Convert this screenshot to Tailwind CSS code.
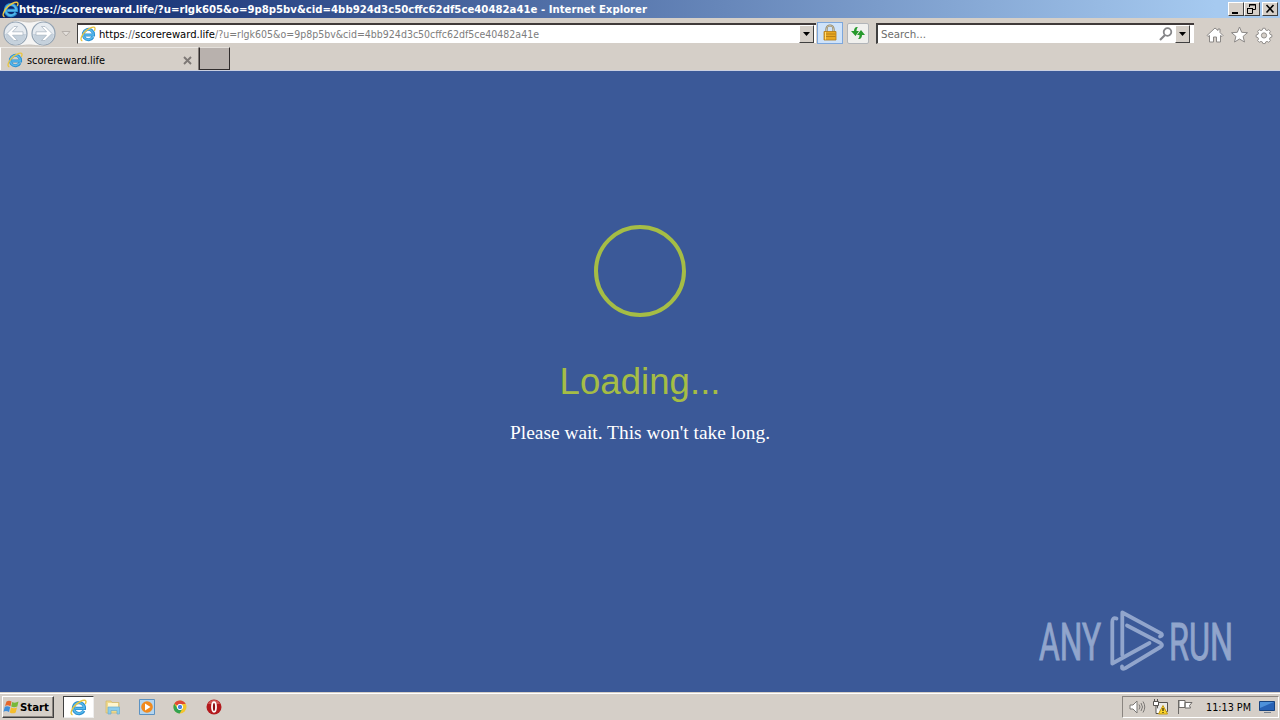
<!DOCTYPE html>
<html lang="en">
<head>
  <meta charset="UTF-8">
  <title>scorereward.life</title>
  <script src="https://cdn.jsdelivr.net/npm/@tailwindcss/browser@4"></script>
</head>
<body class="w-[1280px] h-[720px] overflow-hidden flex flex-col bg-[#d5cfc8] font-['DejaVu_Sans_Condensed','DejaVu_Sans',sans-serif] text-[11px] text-black">

  <!-- shared icons -->
  <svg class="hidden">
    <symbol id="ie" viewBox="0 0 16 16">
      <path d="M13 11A5.200 5.200 0 1 1 13.600 8.900H5" fill="none" stroke="#2b8fd0" stroke-width="3"/>
      <path d="M12.700 10.900A5 5 0 1 1 13.300 8.900H5" fill="none" stroke="#56b9ec" stroke-width="1.500"/>
      <path d="M2.400 14.800C-.6 14.200 1.600 8.600 6.400 4.600C10 1.600 14.400-.1 15 2.200C15.200 3 14.800 4 14.300 4.800" fill="none" stroke="#e9c540" stroke-width="1.300"/>
    </symbol>
    <symbol id="down" viewBox="0 0 7 4"><path d="M0 0h7L3.500 4z" fill="#000"/></symbol>
  </svg>

  <!-- title bar -->
  <header class="h-[18px] shrink-0 flex items-center bg-linear-to-r/srgb from-[#0a246a] to-[#a6caf0] to-95% pl-[2px] pr-[2px]">
    <svg class="size-[17px] shrink-0"><use href="#ie"/></svg>
    <svg class="w-[660px] h-[18px]"><text x="0" y="13" textLength="628" lengthAdjust="spacingAndGlyphs" font-family="DejaVu Sans" font-weight="bold" font-size="11" fill="#fff">https://scorereward.life/?u=rlgk605&amp;o=9p8p5bv&amp;cid=4bb924d3c50cffc62df5ce40482a41e - Internet Explorer</text></svg>
    <div class="ml-auto flex">
      <div class="w-4 h-[14px] bg-[#d5cfc8] border border-t-white border-l-white border-r-[#404040] border-b-[#404040]"><svg class="w-[14px] h-3"><path d="M3 9h6v2H3z"/></svg></div>
      <div class="w-4 h-[14px] bg-[#d5cfc8] border border-t-white border-l-white border-r-[#404040] border-b-[#404040]"><svg class="w-[14px] h-3" fill="none" stroke="#000"><path d="M4.500 4V1.500h6v5H8M4 2h7M2.500 5.500h5v5h-5zM2 5.500h6"/></svg></div>
      <div class="ml-[2px] w-4 h-[14px] bg-[#d5cfc8] border border-t-white border-l-white border-r-[#404040] border-b-[#404040]"><svg class="w-[14px] h-3" stroke="#000" stroke-width="1.600"><path d="M3.500 2l7 7.500M10.500 2l-7 7.500"/></svg></div>
    </div>
  </header>

  <!-- navigation bar -->
  <nav class="h-[29px] shrink-0 flex items-center">
    <svg class="w-[77px] h-[29px] shrink-0">
      <path d="M15 2.500C22 2.500 24 4 29 4S36 2.500 43 2.500A13 13 0 0 1 43 28C36 28 34 27 29 27S22 28 15 28A13 13 0 0 1 15 2.500Z" fill="#f5f4f3" stroke="#c6c2bd"/>
      <g fill="#e6ebf0" stroke="#93a3b3" stroke-width="1.200"><circle cx="15.500" cy="15.500" r="11.500"/><circle cx="43.500" cy="15.500" r="11.500"/></g>
      <path d="M5 16a10.500 10.500 0 0 0 21 0zM33 16a10.500 10.500 0 0 0 21 0z" fill="#c5d1dc"/>
      <g fill="#fff" stroke="#a3b0bd" stroke-width=".7" stroke-linejoin="round">
        <path d="M7 15.500l7-7h3.500l-5 5.300h10.500v3.400h-10.500l5 5.300H14z"/>
        <path d="M52 15.500l-7-7h-3.500l5 5.300H36v3.400h10.500l-5 5.300H45z"/>
      </g>
      <path d="M62 13.500h8l-4 4.500z" fill="#e4e0dc" stroke="#b5afaa"/>
    </svg>
    <div class="w-[739px] h-[21px] mt-px bg-white border-t-2 border-l border-t-[#403a3a] border-l-[#404040] border-b border-b-[#d5cfc8] flex items-center shrink-0">
      <svg class="size-4 ml-[2px] shrink-0"><use href="#ie"/></svg>
      <svg class="w-[480px] h-[18px] ml-[3px]" font-family="DejaVu Sans Condensed" font-size="11">
        <text x="0" y="12.500" textLength="116" lengthAdjust="spacingAndGlyphs" fill="#000">https<tspan fill="#666">://</tspan>scorereward.life</text>
        <text x="116" y="12.500" textLength="324" lengthAdjust="spacingAndGlyphs" fill="#7d7d7d">/?u=rlgk605&amp;o=9p8p5bv&amp;cid=4bb924d3c50cffc62df5ce40482a41e</text>
      </svg>
      <div class="ml-auto mr-[2px] w-[15px] h-[18px] bg-[#d5cfc8] border border-t-white border-l-white border-r-[#404040] border-b-[#404040] flex items-center justify-center"><svg class="w-[7px] h-1"><use href="#down"/></svg></div>
    </div>
    <div class="ml-[1px] w-[26px] h-[22px] bg-[#cfe3fa] border border-[#7da7dc] flex items-center justify-center shrink-0">
      <svg class="w-[14px] h-[17px]"><path d="M3.500 9V5a3.500 3.500 0 0 1 7 0V9" fill="none" stroke="#8c8063" stroke-width="2.200"/><path d="M3.500 8V5a3.500 3.500 0 0 1 7 0V8" fill="none" stroke="#d9d0b4" stroke-width=".8"/><path d="M1 7.500h12v8.500H1z" fill="#e8a823" stroke="#b37a14" stroke-width=".8"/><path d="M1.500 10h11M1.500 12.500h11" stroke="#b98018"/><path d="M2.500 8v7.500" stroke="#ffdb78"/></svg>
    </div>
    <div class="ml-1 w-[22px] h-[21px] mt-px bg-[#f0f0ee] border border-[#b2b5b9] rounded-xs flex items-center justify-center shrink-0">
      <svg class="w-4 h-4"><path d="M7 2C5 2 4 4 4 6H1l4.500 5L9 6H6.500C6.500 4 7 3 8 2zM9 14c2 0 3-2 3-4h3l-4-5-4 5h2.500c0 2-.5 3-1.500 4z" fill="#279a2d"/></svg>
    </div>
    <div class="ml-[7px] w-[318px] h-[21px] mt-px bg-white border-t-2 border-l-2 border-t-[#403a3a] border-l-[#404040] border-b border-b-[#d5cfc8] flex items-center shrink-0">
      <svg class="w-14 h-[18px] ml-[3px]"><text x="0" y="12.500" textLength="45" lengthAdjust="spacingAndGlyphs" font-family="DejaVu Sans Condensed" font-size="11" fill="#6d6d6d">Search...</text></svg>
      <svg class="ml-auto mr-[2px] w-[14px] h-[14px]" fill="none" stroke="#858588" stroke-width="1.800"><circle cx="8.500" cy="5" r="3.800"/><path d="M6 8l-5 5" stroke-width="2.200"/></svg>
      <div class="mr-[4px] w-[15px] h-[18px] bg-[#d5cfc8] border border-t-white border-l-white border-r-[#404040] border-b-[#404040] flex items-center justify-center"><svg class="w-[7px] h-1"><use href="#down"/></svg></div>
    </div>
    <svg class="ml-3 w-[72px] h-5 mt-[4px] shrink-0" fill="#fff" stroke="#8b8886" stroke-linejoin="round">
      <path d="M1 10.500L9 3l3 2.500V4h2v3.500l3 3-1 1-1.500-1V17h-4v-5h-3v5h-4v-6.500L2 11.500z"/>
      <path d="M33.500 2l2.200 5.300 5.800.4-4.400 3.700 1.400 5.600-5-3-5 3 1.400-5.600-4.400-3.700 5.800-.4z"/>
      <g transform="translate(5.800 1) scale(.9)">
        <path d="M56.700 2.500h2.600l.6 2 1.500.6 1.900-1 1.800 1.800-1 1.900.6 1.500 2 .6v2.400l-2 .6-.6 1.500 1 1.900-1.800 1.800-1.900-1-1.500.6-.6 1.800h-2.600l-.6-1.800-1.500-.6-1.900 1-1.800-1.800 1-1.900-.6-1.500-2-.6V9.900l2-.6.600-1.500-1-1.900 1.800-1.800 1.900 1 1.500-.6z"/>
        <circle cx="58" cy="10.500" r="2.900" fill="#d5cfc8"/>
      </g>
    </svg>
  </nav>

  <!-- tabs -->
  <div class="h-6 shrink-0 flex border-b border-b-[#c9cfe0]">
    <div class="w-[199px] flex items-center pl-[6px] pr-[6px] border-t border-t-[#ece9e5] border-l border-l-white border-r border-r-[#807a76]">
      <svg class="size-4 mt-[2px]"><use href="#ie"/></svg>
      <svg class="w-24 h-[18px] ml-[4px] mt-[2px]"><text x="0" y="13" textLength="78" lengthAdjust="spacingAndGlyphs" font-family="DejaVu Sans Condensed" font-size="11">scorereward.life</text></svg>
      <svg class="ml-auto w-[9px] h-[9px] mt-[3px]" stroke="#7d7875" stroke-width="1.900"><path d="M1 1l7 7M8 1l-7 7"/></svg>
    </div>
    <div class="w-[31px] h-[23px] bg-[#b8b1ad] border border-t-[#e4e0db] border-l-[#302c2c] border-r-[#302c2c] border-b-[#302c2c]"></div>
  </div>

  <!-- page -->
  <main class="relative flex-1 bg-[#3b5998] flex flex-col items-center pt-[154px]">
    <div class="size-[92px] rounded-full border-4 border-[#a5bd45]"></div>
    <h1 class="mt-[41px] h-12"><svg class="w-[200px] h-12"><text x="19.500" y="36" textLength="161" lengthAdjust="spacingAndGlyphs" font-family="Liberation Sans" font-size="37" fill="#a5bd45">Loading...</text></svg></h1>
    <p class="mt-3 h-8"><svg class="w-[300px] h-8"><text x="20" y="21" textLength="260" lengthAdjust="spacingAndGlyphs" font-family="Liberation Serif" font-size="19" fill="#fff">Please wait. This won't take long.</text></svg></p>

    <!-- watermark -->
    <svg class="absolute left-[1020px] top-[529px] w-[230px] h-[85px]" fill="#91a5cc" font-family="Roboto" font-size="52">
      <g stroke="#91a5cc" stroke-width="1">
        <text x="19" y="59.500" textLength="62" lengthAdjust="spacingAndGlyphs">ANY</text>
        <text x="149" y="59.500" textLength="64" lengthAdjust="spacingAndGlyphs">RUN</text>
      </g>
      <g fill="none" stroke="#91a5cc" stroke-width="3.800" stroke-linejoin="round" stroke-linecap="round">
        <path d="M96.500 18.500Q92.300 17 92.300 22V63.500L129.500 43"/>
        <path d="M102.300 55V12.500L141 33.300Q143.500 35.500 140 36.500"/>
        <path d="M107 25.500L140.500 43Q143.500 45 140.500 47L105 68.300Q101.500 70 102 66.500"/>
      </g>
    </svg>
  </main>

  <!-- taskbar -->
  <footer class="h-7 shrink-0 flex items-center border-t border-t-[#d5cfc8] shadow-[inset_0_1px_0_#fff] pl-[2px] pr-[1px]">
    <div class="w-[52px] h-[22px] mt-px border border-t-white border-l-white border-r-[#404040] border-b-[#404040] shadow-[inset_-1px_-1px_0_#8a8580] flex items-center">
      <svg class="w-4 h-4 shrink-0"><path d="M3.500 2.500Q6 .8 8.500 2.500L7.500 7.200Q4.500 5.500 2 7z" fill="#e5672c"/><path d="M9.200 3Q12 4.500 15.500 2.500L14.300 7.500Q11 9 8.200 7.500z" fill="#78b83b"/><path d="M1.800 7.800Q4 6.500 7.200 8L6 13Q3 11.200 .5 12.800z" fill="#3e8edb"/><path d="M8 8.500Q11 10 14 8.500L12.700 13.500Q10 15.200 6.800 13.500z" fill="#f5bd2c"/></svg>
      <svg class="w-[33px] h-[18px] shrink-0"><text x="1" y="13" textLength="29" lengthAdjust="spacingAndGlyphs" font-family="DejaVu Sans" font-weight="bold" font-size="11">Start</text></svg>
    </div>
    <div class="ml-[9px] w-[31px] h-[22px] mt-px bg-white border border-t-[#404040] border-l-[#404040] border-r-[#eee] border-b-[#eee] flex items-center justify-center"><svg class="w-[17px] h-[17px]"><use href="#ie"/></svg></div>
    <svg class="ml-[11px] w-4 h-4 mt-px"><path d="M1 2h5l1 1.500h7V14H1z" fill="#efd98c" stroke="#d2b768" stroke-width=".7"/><path d="M3 4h10v4H3z" fill="#fff6ce"/><path d="M3 8h11.500v7h-2.500v-3.500H6V15H3z" fill="#8bcdec" stroke="#6faecb" stroke-width=".7"/></svg>
    <svg class="ml-[18px] w-4 h-4 mt-px"><path d="M.5.5h15v15H.5z" fill="#b4d5ef" stroke="#5c92c2"/><circle cx="8" cy="8" r="5.800" fill="#f18a1d"/><path d="M6 4.500l5.500 3.500L6 11.500z" fill="#fff"/></svg>
    <svg class="ml-[18px] w-[14px] h-[14px] mt-px"><circle cx="7" cy="7" r="6.500" fill="#f4c52c"/><path d="M7 7L1.300 3.700A6.500 6.500 0 0 1 12.700 4H7z" fill="#de4836"/><path d="M1.300 3.700A6.500 6.500 0 0 0 6.700 13.500L9.500 8.500 7 9.500 4.500 8.500z" fill="#32a350"/><circle cx="7" cy="7" r="2.700" fill="#4a86e0" stroke="#fff"/></svg>
    <svg class="ml-[19px] w-4 h-4 mt-px"><circle cx="8" cy="8" r="7.500" fill="#b3191d"/><path d="M2 5a6.500 6.500 0 0 1 12 0z" fill="#d05452"/><ellipse cx="8" cy="8" rx="2" ry="4.800" fill="#8d1014" stroke="#fff" stroke-width="1.800"/></svg>

    <div class="ml-auto w-[157px] h-[22px] mt-px border border-t-[#8a8580] border-l-[#8a8580] border-r-white border-b-white flex items-center pl-[6px] pr-[3px]">
      <svg class="w-[17px] h-4" fill="none" stroke="#7b7875"><path d="M1 6h3l4-4v12l-4-4H1z" fill="#fff"/><path d="M10 5.500q2 2.500 0 5M12 4q3 4 0 8M14 2.500q3.500 5.500 0 11"/></svg>
      <svg class="ml-[6px] w-[17px] h-4" fill="#fff" stroke="#55524f"><path d="M5.500 3.500h10v9h-10z" fill="#e9e9e6"/><path d="M1.500 2.500h5v4h-5zM2.500 0v2M5.500 0v2M4 7v7.500h5"/><path d="M11 6.500l4.500 8.500h-9z" fill="#fcd62c" stroke="#c39813"/><path d="M11 9v3M11 13v1" stroke="#000"/></svg>
      <svg class="ml-[7px] w-[17px] h-4" fill="#fff" stroke="#6d6a67"><path d="M2.500 1v14M3 1.500h6v7H3zM9 3.500h7l-2.500 3 1 2.500H9z"/></svg>
      <svg class="ml-[12px] w-[49px] h-[18px] shrink-0"><text x="1" y="13" textLength="45" lengthAdjust="spacingAndGlyphs" font-family="DejaVu Sans Condensed" font-size="11">11:13 PM</text></svg>
      <svg class="ml-auto w-4 h-[14px] shrink-0"><path d="M.5 1.500h15v9H.5z" fill="#2862b5" stroke="#17437f"/><path d="M1 2h14L1 8z" fill="#4e91da"/><path d="M5 12.500h7" stroke="#77818d"/></svg>
    </div>
  </footer>
</body>
</html>
